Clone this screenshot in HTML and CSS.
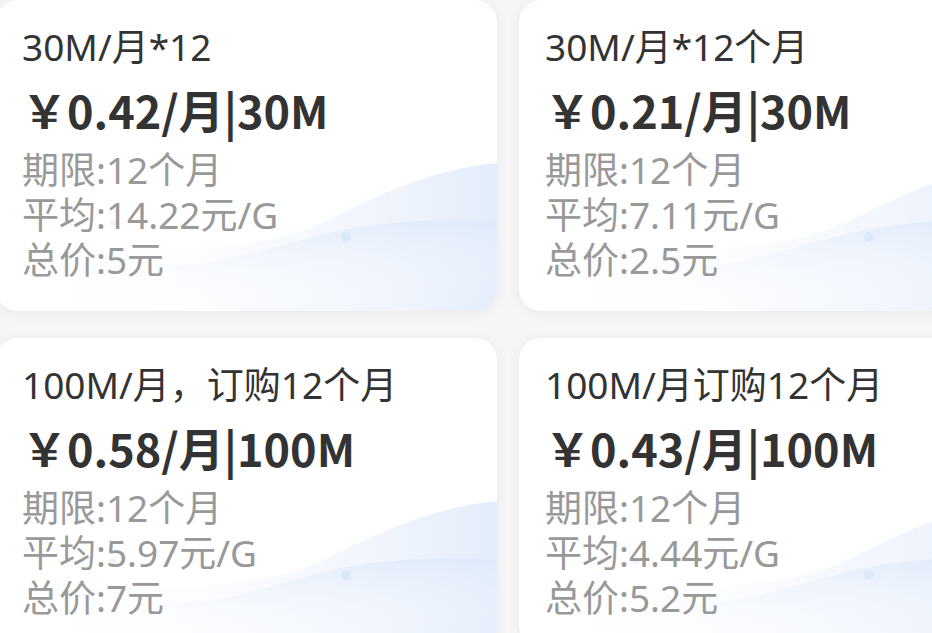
FILE: index.html
```html
<!DOCTYPE html>
<html lang="zh-CN">
<head>
    <meta charset="UTF-8">
    <meta name="viewport" content="width=device-width, initial-scale=1.0">
    <title>流量套餐</title>
    <link rel="stylesheet" href="styles.css">
</head>
<body>
    <div class="grid">
        <!-- 30M 12 -->
        <div class="card">
            <svg class="wave" viewBox="0 0 501 170" preserveAspectRatio="none">
                <defs>
                    <linearGradient id="w1a" x1="0" y1="0" x2="1" y2="0">
                        <stop offset="0" stop-color="#e8f0fc" stop-opacity="0"/>
                        <stop offset="0.35" stop-color="#eaf1fc" stop-opacity="0.15"/>
                        <stop offset="0.7" stop-color="#eaf1fc" stop-opacity="0.6"/>
                        <stop offset="1" stop-color="#e3ecfb"/>
                    </linearGradient>
                    <linearGradient id="w1b" x1="0" y1="0" x2="0" y2="1">
                        <stop offset="0" stop-color="#dde8fa"/>
                        <stop offset="1" stop-color="#ffffff" stop-opacity="0"/>
                    </linearGradient>
                </defs>
                <path d="M40 112 C140 100 250 120 330 80 C390 50 440 28 501 22 L501 170 L40 170 Z" fill="url(#w1a)"/>
                <path d="M180 125 C250 120 290 100 350 88 C410 78 460 78 501 80 L501 170 L180 170 Z" fill="url(#w1b)" opacity="0.7"/>
                <circle cx="350" cy="96" r="5" fill="#dbe8fb"/>
                <circle cx="398" cy="84" r="2" fill="#e6eefb"/>
                <circle cx="117" cy="82" r="3" fill="#edf3fd"/>
            </svg>
            <div class="title">30M/月*12</div>
            <div class="price">￥0.42/月|30M</div>
            <div class="info">期限:12个月</div>
            <div class="info">平均:14.22元/G</div>
            <div class="info">总价:5元</div>
        </div>

        <!-- 30M 12个月 -->
        <div class="card">
            <svg class="wave" viewBox="0 0 501 170" preserveAspectRatio="none">
                <path d="M40 112 C140 100 250 120 330 80 C390 50 440 28 501 22 L501 170 L40 170 Z" fill="url(#w1a)"/>
                <path d="M180 125 C250 120 290 100 350 88 C410 78 460 78 501 80 L501 170 L180 170 Z" fill="url(#w1b)" opacity="0.7"/>
                <circle cx="350" cy="96" r="5" fill="#dbe8fb"/>
                <circle cx="398" cy="84" r="2" fill="#e6eefb"/>
                <circle cx="117" cy="82" r="3" fill="#edf3fd"/>
            </svg>
            <div class="title">30M/月*12个月</div>
            <div class="price">￥0.21/月|30M</div>
            <div class="info">期限:12个月</div>
            <div class="info">平均:7.11元/G</div>
            <div class="info">总价:2.5元</div>
        </div>

        <!-- 100M 订购12个月 -->
        <div class="card">
            <svg class="wave" viewBox="0 0 501 170" preserveAspectRatio="none">
                <path d="M40 112 C140 100 250 120 330 80 C390 50 440 28 501 22 L501 170 L40 170 Z" fill="url(#w1a)"/>
                <path d="M180 125 C250 120 290 100 350 88 C410 78 460 78 501 80 L501 170 L180 170 Z" fill="url(#w1b)" opacity="0.7"/>
                <circle cx="350" cy="96" r="5" fill="#dbe8fb"/>
                <circle cx="398" cy="84" r="2" fill="#e6eefb"/>
                <circle cx="117" cy="82" r="3" fill="#edf3fd"/>
            </svg>
            <div class="title">100M/月，订购12个月</div>
            <div class="price">￥0.58/月|100M</div>
            <div class="info">期限:12个月</div>
            <div class="info">平均:5.97元/G</div>
            <div class="info">总价:7元</div>
        </div>

        <!-- 100M 订购12个月 -->
        <div class="card">
            <svg class="wave" viewBox="0 0 501 170" preserveAspectRatio="none">
                <path d="M40 112 C140 100 250 120 330 80 C390 50 440 28 501 22 L501 170 L40 170 Z" fill="url(#w1a)"/>
                <path d="M180 125 C250 120 290 100 350 88 C410 78 460 78 501 80 L501 170 L180 170 Z" fill="url(#w1b)" opacity="0.7"/>
                <circle cx="350" cy="96" r="5" fill="#dbe8fb"/>
                <circle cx="398" cy="84" r="2" fill="#e6eefb"/>
                <circle cx="117" cy="82" r="3" fill="#edf3fd"/>
            </svg>
            <div class="title">100M/月订购12个月</div>
            <div class="price">￥0.43/月|100M</div>
            <div class="info">期限:12个月</div>
            <div class="info">平均:4.44元/G</div>
            <div class="info">总价:5.2元</div>
        </div>
    </div>
</body>
</html>
```

FILE: styles.css
```css
body {
    font-family: "Noto Sans", "Noto Sans CJK SC", sans-serif;
    margin: 0;
    padding: 0;
    background-color: #f6f6f6;
    overflow: hidden;
}

.grid {
    display: grid;
    grid-template-columns: 501px 501px;
    column-gap: 22px;
    row-gap: 27px;
    margin-left: -4px;
    width: 1100px;
}

.card {
    position: relative;
    height: 311px;
    box-sizing: border-box;
    padding: 24px 20px 0 26px;
    background-color: #fff;
    border-radius: 22px;
    box-shadow: 0 2px 14px rgba(0, 0, 0, 0.06);
    overflow: hidden;
}

.wave {
    position: absolute;
    left: 0;
    bottom: 0;
    width: 100%;
    height: 170px;
}

.title,
.price,
.info {
    position: relative;
    white-space: nowrap;
}

.title {
    font-size: 37px;
    line-height: 45px;
    color: #333;
}

.price {
    margin-top: 13px;
    font-family: "Noto Sans CJK SC", sans-serif;
    font-size: 45px;
    line-height: 56px;
    font-weight: bold;
    color: #333;
}

.info {
    font-size: 37px;
    line-height: 45px;
    color: #999;
}

.price + .info {
    margin-top: 9px;
}
```
